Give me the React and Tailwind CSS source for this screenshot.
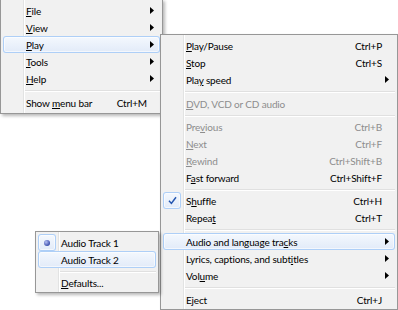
import React from 'react';

const font = "font-['Segoe_UI','Lato',sans-serif] text-[10px] leading-none tracking-[-0.15px]";

// Win7-style menu chrome
const menuBox =
  'absolute border border-[#979797] bg-[#f1f1f1] bg-[linear-gradient(to_right,transparent_22px,#e2e3e3_22px,#e2e3e3_23px,#ffffff_23px,#ffffff_24px,transparent_24px)] px-[2px] shadow-[2px_2px_3px_rgba(0,0,0,0.28)]';

const hot =
  'rounded-[3px] bg-linear-to-b from-[#f5f9fe] to-[#e1eaf8] shadow-[inset_0_0_0_1px_#aecff7,inset_0_0_0_2px_rgba(255,255,255,0.6)]';

function Label({ text, k }) {
  if (k == null) return text;
  return (
    <>
      {text.slice(0, k)}
      <span className="underline decoration-1 underline-offset-[1px]">{text[k]}</span>
      {text.slice(k + 1)}
    </>
  );
}

function Arrow() {
  return (
    <svg width="4" height="7" viewBox="0 0 4 7">
      <path d="M0 0L4 3.5L0 7Z" fill="#000" />
    </svg>
  );
}

function Check() {
  return (
    <svg width="9" height="9" viewBox="0 0 9 9">
      <path d="M1 4.8L3.4 7.4L8 1.2" fill="none" stroke="#2456b0" strokeWidth="1.5" />
    </svg>
  );
}

function Mark({ type }) {
  if (!type) return null;
  return (
    <div className={`flex h-[17px] w-[18px] items-center justify-center ${hot}`}>
      {type === 'check' ? (
        <Check />
      ) : (
        <svg width="6" height="6" viewBox="0 0 6 6">
          <defs>
            <radialGradient id="dot" cx="35%" cy="35%" r="70%">
              <stop offset="0" stopColor="#b4bff3" />
              <stop offset="1" stopColor="#3347a8" />
            </radialGradient>
          </defs>
          <circle cx="3" cy="3" r="3" fill="url(#dot)" />
        </svg>
      )}
    </div>
  );
}

function Item({ text, k, sc, arrow, disabled, active, mark }) {
  return (
    <div
      className={`flex h-[17px] items-center ${active ? hot : ''} ${disabled ? 'text-[#8d8d8d]' : 'text-black'}`}
    >
      <div className="flex w-[23px] shrink-0 items-center self-stretch">
        <Mark type={mark} />
      </div>
      <span className="flex-1 whitespace-nowrap">
        <Label text={text} k={k} />
      </span>
      {sc && <span className="mr-[13px] whitespace-nowrap">{sc}</span>}
      {arrow && (
        <span className="mr-[6px] flex">
          <Arrow />
        </span>
      )}
    </div>
  );
}

function Sep({ h = 'h-[7px]' }) {
  return (
    <div className={`flex items-center pl-[22px] ${h}`}>
      <div className="h-px w-full bg-[#e0e0e0] shadow-[0_1px_0_#ffffff]" />
    </div>
  );
}

export default function App() {
  return (
    <div className={`relative h-[310px] w-[398px] overflow-hidden bg-white ${font}`}>
      {/* top-level menu */}
      <div className={`${menuBox} left-0 top-[-1px] z-10 w-[163px] py-[2px]`}>
        <Item text="File" k={0} arrow />
        <Item text="View" k={0} arrow />
        <Item text="Play" k={0} arrow active />
        <Item text="Tools" k={0} arrow />
        <Item text="Help" k={0} arrow />
        <Sep />
        <Item text="Show menu bar" k={5} sc="Ctrl+M" />
      </div>

      {/* Play submenu */}
      <div className={`${menuBox} left-[160px] top-[34px] z-20 w-[238px] pb-[1px] pt-[2px]`}>
        <Item text="Play/Pause" k={0} sc="Ctrl+P" />
        <Item text="Stop" k={0} sc="Ctrl+S" />
        <Item text="Play speed" k={3} arrow />
        <Sep />
        <Item text="DVD, VCD or CD audio" k={0} disabled />
        <Sep h="h-[6px]" />
        <Item text="Previous" k={3} sc="Ctrl+B" disabled />
        <Item text="Next" k={0} sc="Ctrl+F" disabled />
        <Item text="Rewind" k={0} sc="Ctrl+Shift+B" disabled />
        <Item text="Fast forward" k={1} sc="Ctrl+Shift+F" />
        <Sep h="h-[6px]" />
        <Item text="Shuffle" k={1} sc="Ctrl+H" mark="check" />
        <Item text="Repeat" k={5} sc="Ctrl+T" />
        <Sep />
        <Item text="Audio and language tracks" k={22} arrow active />
        <Item text="Lyrics, captions, and subtitles" k={26} arrow />
        <Item text="Volume" k={3} arrow />
        <Sep />
        <Item text="Eject" sc="Ctrl+J" />
      </div>

      {/* Audio tracks submenu */}
      <div className={`${menuBox} left-[35px] top-[231px] z-30 w-[124px] pb-[1px] pt-[2px]`}>
        <Item text="Audio Track 1" mark="radio" />
        <Item text="Audio Track 2" active />
        <Sep h="h-[6px]" />
        <Item text="Defaults..." k={0} />
      </div>
    </div>
  );
}
